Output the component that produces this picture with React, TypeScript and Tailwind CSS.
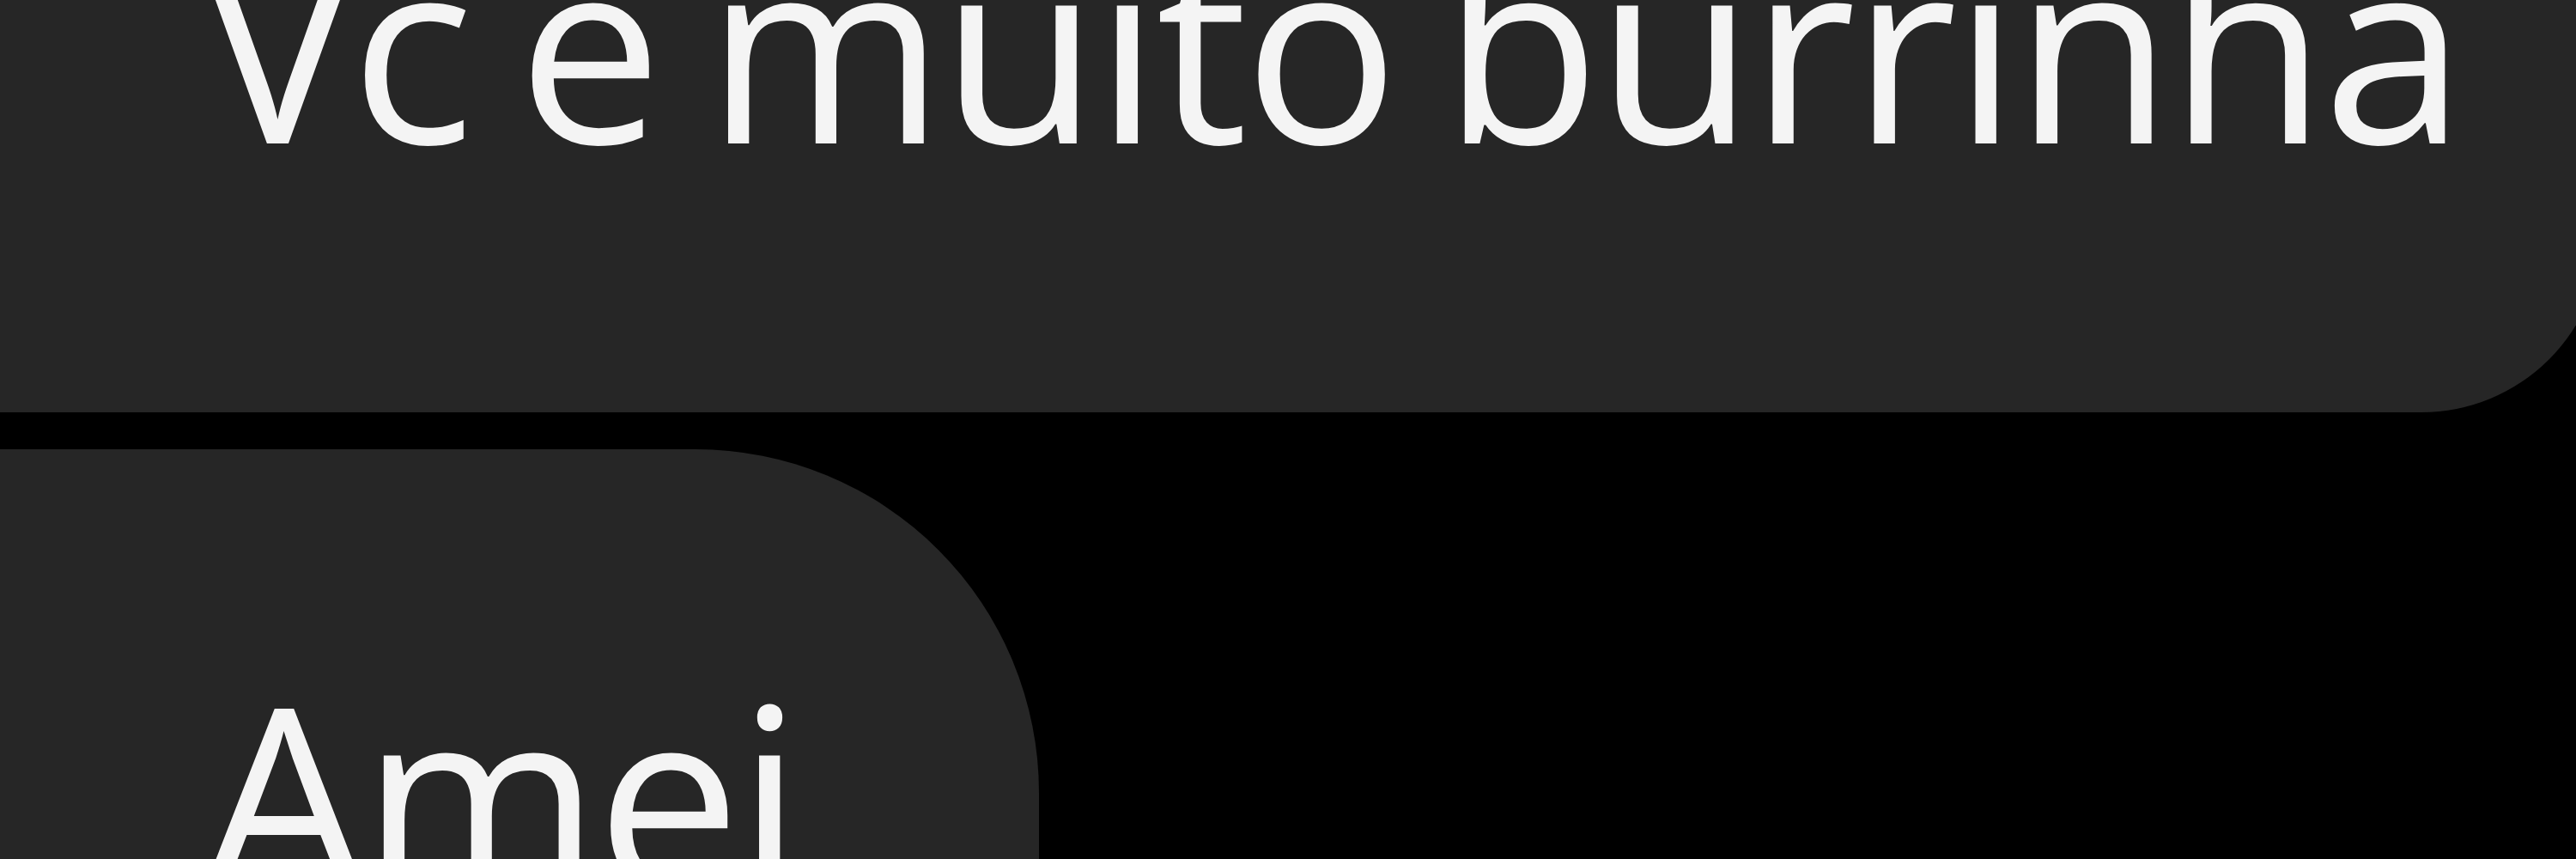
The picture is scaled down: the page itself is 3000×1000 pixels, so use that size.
export default function App() {
  return (
    <div className="h-[1000px] w-[3000px] overflow-hidden bg-black">
      <div className="flex flex-col gap-[43px]" style={{ fontFamily: '"Open Sans", "Noto Sans", sans-serif' }}>
        {/* sent earlier, top of bubble is scrolled off */}
        <div className="-ml-[100px] -mt-[219px] w-[3130px] rounded-br-[210px] bg-[#262626] pb-[279px] pl-[334px] pt-[120px]">
          <p className="whitespace-nowrap text-[300px] leading-none tracking-[-4.5px] text-[#f4f4f4] [word-spacing:-18px]">
            Vc e muito burrinha
          </p>
        </div>
        <div className="-ml-[100px] w-[1310px] rounded-tr-[400px] bg-[#262626] pb-[200px] pl-[336px] pt-[251px]">
          <p className="whitespace-nowrap text-[300px] leading-none tracking-[-4.5px] text-[#f4f4f4]">Amei</p>
        </div>
      </div>
    </div>
  );
}
